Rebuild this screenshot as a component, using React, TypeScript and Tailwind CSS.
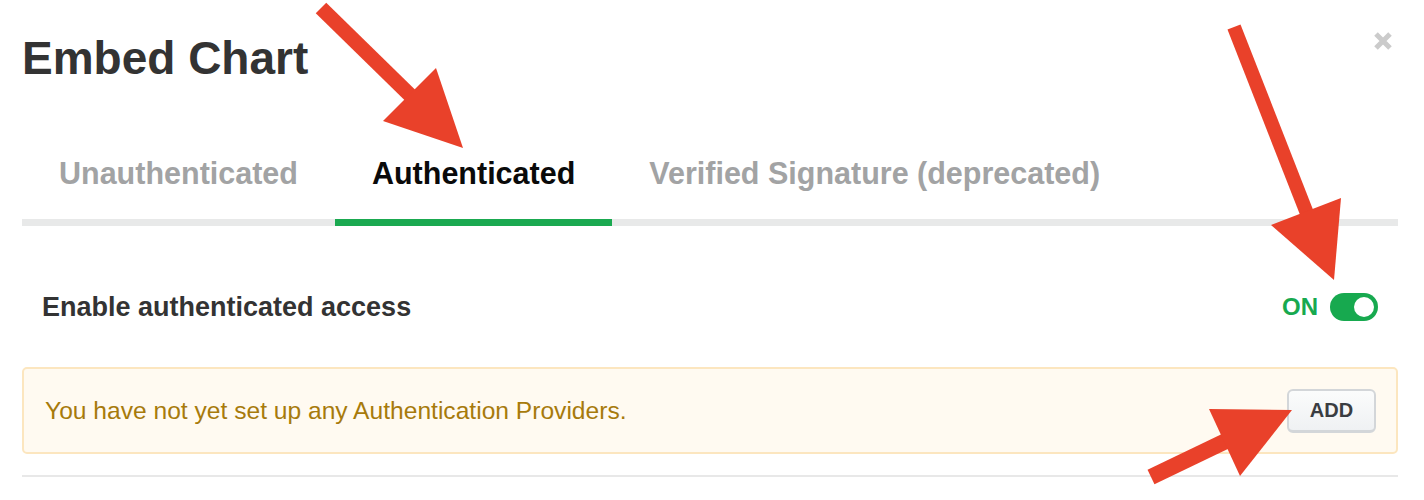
import React from "react";

const font = { fontFamily: '"Liberation Sans", Arial, sans-serif' };

function CloseIcon() {
  return (
    <svg width="20" height="20" viewBox="0 0 20 20" className="block">
      <path d="M3 3 L17 17 M17 3 L3 17" stroke="#cbcbcb" strokeWidth="5" strokeLinecap="butt" />
    </svg>
  );
}

function Toggle() {
  return (
    <div className="flex h-[28px] w-[48px] items-center justify-end rounded-full bg-[#17a94f] pr-[4px]">
      <div className="h-[20px] w-[20px] rounded-full bg-white" />
    </div>
  );
}

function Arrows() {
  const red = "#e9412a";
  return (
    <svg
      className="pointer-events-none absolute left-0 top-0"
      width="1424"
      height="500"
      viewBox="0 0 1424 500"
    >
      <line x1="321" y1="8" x2="413" y2="98" stroke={red} strokeWidth="15" />
      <polygon points="383,121 436,68 463,148" fill={red} />
      <line x1="1234" y1="27" x2="1308" y2="216" stroke={red} strokeWidth="14" />
      <polygon points="1271,225 1341,198 1334,280" fill={red} />
      <line x1="1151" y1="477" x2="1228" y2="440" stroke={red} strokeWidth="16" />
      <polygon points="1209,409 1240,476 1292,410" fill={red} />
    </svg>
  );
}

const tabs = ["Unauthenticated", "Authenticated", "Verified Signature (deprecated)"];

export default function App() {
  return (
    <div className="relative h-[500px] w-full overflow-hidden bg-white" style={font}>
      <div className="pl-[22px] pr-[26px]">
        <div className="flex items-start justify-between">
          <h1 className="mt-[35px] h-[46px] text-[46px] font-bold leading-[46px] text-[#333333]">
            Embed Chart
          </h1>
          <button className="mr-[5px] mt-[31px]" aria-label="Close">
            <CloseIcon />
          </button>
        </div>

        <div className="mt-[77px] flex border-b-[7px] border-[#e8e9e9]">
          {tabs.map((t) => {
            const active = t === "Authenticated";
            return (
              <div
                key={t}
                className={
                  active
                    ? "-mb-[7px] border-b-[7px] border-[#1aa950] px-[37px] pb-[31px] text-[30.5px] font-bold leading-[30px] text-[#0a0a0a]"
                    : "-mb-[7px] border-b-[7px] border-transparent px-[37px] pb-[31px] text-[30.5px] font-bold leading-[30px] text-[#a2a3a4]"
                }
              >
                {t}
              </div>
            );
          })}
        </div>

        <div className="mt-[67px] flex h-[28px] items-center justify-between pl-[20px] pr-[20px]">
          <span className="text-[27px] font-bold leading-[27px] text-[#333333]">
            Enable authenticated access
          </span>
          <div className="flex items-center gap-[12px]">
            <span className="text-[24px] font-bold leading-[24px] text-[#17a94f]">ON</span>
            <Toggle />
          </div>
        </div>

        <div className="mt-[46px] flex h-[87px] items-center justify-between rounded-[5px] border-2 border-[#fce6bf] bg-[#fffaf1] pl-[21px] pr-[20px]">
          <span className="text-[24.6px] leading-[25px] text-[#a77a0c]">
            You have not yet set up any Authentication Providers.
          </span>
          <button className="flex h-[44px] w-[89px] items-center justify-center rounded-[6px] border-2 border-b-[3px] border-[#d3d6d9] bg-gradient-to-b from-[#fbfcfc] to-[#eff1f3] text-[20px] font-bold text-[#3a3d41]">
            ADD
          </button>
        </div>

        <div className="mt-[21px] h-[2px] bg-[#e8e8e8]" />
      </div>
      <Arrows />
    </div>
  );
}
